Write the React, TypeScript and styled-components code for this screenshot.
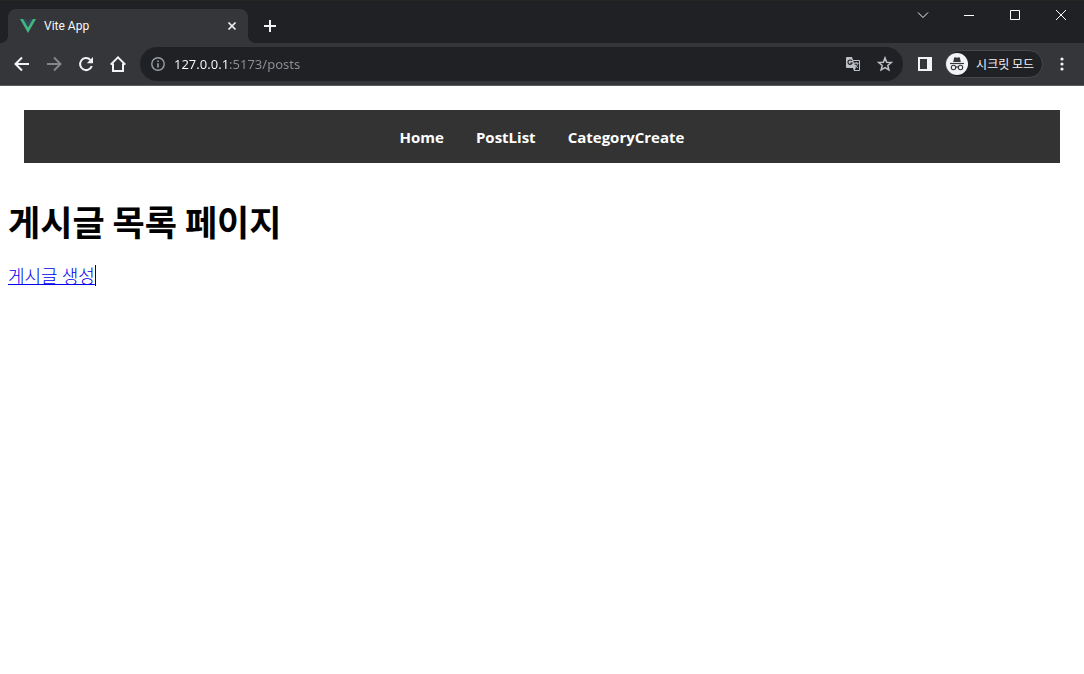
import React from 'react';
import styled, { createGlobalStyle } from 'styled-components';

const Global = createGlobalStyle`
  * { box-sizing: border-box; }
  body { margin: 0; background: #fff; font-family: "Noto Sans", "Noto Sans CJK KR", sans-serif; }
  svg { display: block; flex: none; }
`;

const TitleBar = styled.header`
  display: flex;
  height: 43px;
  padding-left: 8px;
  background: #202124;
  border-top: 1px solid #242622;
`;

const Tab = styled.div`
  position: relative;
  display: flex;
  align-items: center;
  gap: 8px;
  width: 240px;
  margin-top: 8px;
  padding: 0 8px 0 12px;
  border-radius: 8px 8px 0 0;
  background: #35363a;
  &::before, &::after {
    content: "";
    position: absolute;
    bottom: 0;
    width: 8px;
    height: 8px;
  }
  &::before { right: 100%; background: radial-gradient(circle at 0 0, #202124 8px, #35363a 8px); }
  &::after { left: 100%; background: radial-gradient(circle at 100% 0, #202124 8px, #35363a 8px); }
`;

const TabTitle = styled.span`
  flex: 1;
  font: 12px/16px Roboto, sans-serif;
  color: #f8f9fa;
`;

const IconButton = styled.button<{ $w?: number; $h?: number; $color?: string }>`
  display: flex;
  align-items: center;
  justify-content: center;
  flex: none;
  width: ${p => p.$w ?? 32}px;
  height: ${p => p.$h ?? 32}px;
  padding: 0;
  border: 0;
  background: none;
  color: ${p => p.$color ?? '#f1f3f4'};
`;

const NewTab = styled.div`
  padding: 9px 0 0 6px;
`;

const WindowControls = styled.div`
  display: flex;
  margin-left: auto;
`;

const Toolbar = styled.div`
  display: flex;
  align-items: center;
  height: 43px;
  padding: 0 6px;
  background: #35363a;
  border-bottom: 1px solid #5b5c60;
`;

const Omnibox = styled.div`
  display: flex;
  align-items: center;
  flex: 1;
  min-width: 0;
  height: 34px;
  margin: 0 6px;
  padding: 0 2px 0 11px;
  border-radius: 17px;
  background: #202124;
`;

const Address = styled.input`
  flex: 1;
  min-width: 0;
  height: 24px;
  margin-left: 9px;
  padding: 0;
  border: 0;
  outline: 0;
  font: 13px/24px "Noto Sans", sans-serif;
  background: linear-gradient(90deg, #fff 55px, #8d9196 55px);
  background-clip: text;
  -webkit-background-clip: text;
  -webkit-text-fill-color: transparent;
`;

const Incognito = styled.button`
  display: flex;
  align-items: center;
  gap: 8px;
  height: 28px;
  margin: 0 3px 0 4px;
  padding: 0 8px 0 0;
  border: 1px solid #46474b;
  border-radius: 14px;
  background: #202124;
  color: #f1f3f4;
  font: 12px/16px "Noto Sans CJK KR", sans-serif;
  white-space: nowrap;
`;

const Page = styled.main`
  padding: 24px 8px;
`;

const Nav = styled.nav`
  display: flex;
  justify-content: center;
  gap: 32px;
  margin: 0 16px 32px;
  padding: 17px 16px 16px;
  background: #333;
`;

const NavLink = styled.a`
  color: #fff;
  font: bold 15px/20px "Open Sans", "Noto Sans", sans-serif;
  text-decoration: none;
`;

const Heading = styled.h1`
  margin: 0 0 18px;
  font: bold 35px/52px "Noto Sans CJK KR", sans-serif;
  color: #000;
`;

const CreateLink = styled.a`
  display: inline-block;
  border-right: 1px solid #00008b;
  color: #00e;
  font: 300 18px/21px "Noto Sans CJK KR", sans-serif;
  text-underline-offset: 1px;
  text-decoration-thickness: 1px;
`;

const stroke = { fill: 'none', stroke: 'currentColor' };

export default function App() {
  return (
    <>
      <Global />
      <TitleBar>
        <Tab>
          <svg width="16" height="16" viewBox="0 0 16 16">
            <path d="M0 1h3.2L8 9.3 12.8 1H16L8 15z" fill="#41b883" />
            <path d="M3.2 1H6l2 3.4L10 1h2.8L8 9.3z" fill="#35495e" />
          </svg>
          <TabTitle>Vite App</TabTitle>
          <IconButton $w={16} $h={16} aria-label="Close tab">
            <svg width="16" height="16" viewBox="0 0 16 16" {...stroke} strokeWidth="1.7">
              <path d="M4.5 4.5l7 7M11.5 4.5l-7 7" />
            </svg>
          </IconButton>
        </Tab>
        <NewTab>
          <IconButton $h={32} aria-label="New tab">
            <svg width="14" height="14" viewBox="0 0 14 14" {...stroke} strokeWidth="2">
              <path d="M7 1v12M1 7h12" />
            </svg>
          </IconButton>
        </NewTab>
        <WindowControls>
          <IconButton $w={46} $h={28} aria-label="Search tabs">
            <svg width="12" height="12" viewBox="0 0 12 12" {...stroke}><path d="M1 3.5l5 5 5-5" /></svg>
          </IconButton>
          <IconButton $w={46} $h={28} $color="#fff" aria-label="Minimize">
            <svg width="10" height="10" viewBox="0 0 10 10" {...stroke}><path d="M0 5.5h10" /></svg>
          </IconButton>
          <IconButton $w={46} $h={28} $color="#fff" aria-label="Maximize">
            <svg width="10" height="10" viewBox="0 0 10 10" {...stroke}><path d="M.5.5h9v9h-9z" /></svg>
          </IconButton>
          <IconButton $w={46} $h={28} $color="#fff" aria-label="Close">
            <svg width="10" height="10" viewBox="0 0 10 10" {...stroke}><path d="M0 0l10 10M10 0L0 10" /></svg>
          </IconButton>
        </WindowControls>
      </TitleBar>
      <Toolbar>
        <IconButton aria-label="Back">
          <svg width="16" height="16" viewBox="0 0 16 16" {...stroke} strokeWidth="2">
            <path d="M15 8H2.5M8 1.5L1.5 8 8 14.5" />
          </svg>
        </IconButton>
        <IconButton $color="#85868a" aria-label="Forward">
          <svg width="16" height="16" viewBox="0 0 16 16" {...stroke} strokeWidth="2">
            <path d="M1 8h12.5M8 1.5L14.5 8 8 14.5" />
          </svg>
        </IconButton>
        <IconButton aria-label="Reload">
          <svg width="16" height="16" viewBox="0 0 16 16" {...stroke} strokeWidth="2">
            <path d="M13.8 10A6 6 0 1 1 12.4 3.9" />
            <path d="M15 1v6.2H8.8z" fill="currentColor" stroke="none" />
          </svg>
        </IconButton>
        <IconButton aria-label="Home">
          <svg width="16" height="16" viewBox="0 0 16 16" {...stroke} strokeWidth="2">
            <path d="M.7 8.6L8 1.4l7.3 7.2M3 7.5V15h10V7.5" />
          </svg>
        </IconButton>
        <Omnibox>
          <svg width="14" height="14" viewBox="0 0 14 14" color="#9aa0a6" {...stroke} strokeWidth="1.4">
            <circle cx="7" cy="7" r="6.2" />
            <path d="M7 6.2v4.3M7 3.5V5" strokeWidth="1.6" />
          </svg>
          <Address aria-label="Address" defaultValue="127.0.0.1:5173/posts" spellCheck={false} />
          <IconButton $color="#bdc1c6" aria-label="Translate">
            <svg width="14" height="14" viewBox="0 0 14 14">
              <path d="M1 0h5l1 3h6a1 1 0 0 1 1 1v9a1 1 0 0 1-1 1H8l-1-3H1a1 1 0 0 1-1-1V1a1 1 0 0 1 1-1z" fill="currentColor" />
              <path d="M7.3 4H13v9H8.7l1.2-2z" fill="#202124" />
              <path d="M6.1 4.1A2.2 2.2 0 1 0 6.2 6H4.2" fill="none" stroke="#202124" strokeWidth="1.1" />
              <path d="M8 6.2h4.6M10.2 5v1.2M11.8 6.2c-.4 1.8-1.4 3-2.6 3.8M8.7 7.3c.6 1.5 1.8 2.6 3.2 3.6" {...stroke} />
            </svg>
          </IconButton>
          <IconButton $color="#bdc1c6" aria-label="Bookmark">
            <svg width="16" height="16" viewBox="0 0 16 16" {...stroke} strokeWidth="1.5">
              <path d="M8 1.9l1.7 4.3 4.6.3-3.5 3 1.1 4.5L8 11.6 4.1 14l1.1-4.5-3.5-3 4.6-.3z" />
            </svg>
          </IconButton>
        </Omnibox>
        <IconButton aria-label="Side panel">
          <svg width="14" height="14" viewBox="0 0 14 14">
            <path d="M0 0h14v14H0zM2 2v10h7V2z" fill="currentColor" fillRule="evenodd" />
          </svg>
        </IconButton>
        <Incognito>
          <svg width="22" height="22" viewBox="0 0 22 22">
            <circle cx="11" cy="11" r="11" fill="#f1f3f4" />
            <path d="M7.2 9L8 5.2Q8.2 4 9.3 4.2L11 4.7l1.7-.5q1.1-.2 1.3 1L14.8 9z" fill="#35363a" />
            <path d="M4 10.5h14" stroke="#35363a" strokeWidth="1.2" />
            <g fill="none" stroke="#35363a" strokeWidth="1.1">
              <circle cx="7.5" cy="14.5" r="2.2" />
              <circle cx="14.5" cy="14.5" r="2.2" />
              <path d="M9.7 14.3q1.3-.9 2.6 0" />
            </g>
          </svg>
          시크릿 모드
        </Incognito>
        <IconButton aria-label="Menu">
          <svg width="4" height="14" viewBox="0 0 4 14" fill="currentColor">
            <circle cx="2" cy="2" r="1.6" /><circle cx="2" cy="7" r="1.6" /><circle cx="2" cy="12" r="1.6" />
          </svg>
        </IconButton>
      </Toolbar>
      <Page>
        <Nav>
          <NavLink href="#home">Home</NavLink>
          <NavLink href="#posts">PostList</NavLink>
          <NavLink href="#category">CategoryCreate</NavLink>
        </Nav>
        <Heading>게시글 목록 페이지</Heading>
        <CreateLink href="#create">게시글 생성</CreateLink>
      </Page>
    </>
  );
}
